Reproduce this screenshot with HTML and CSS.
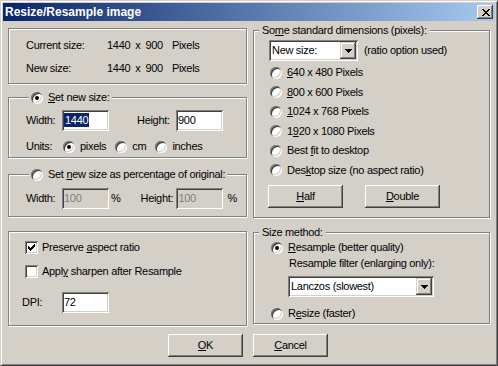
FILE: index.html
```html
<!DOCTYPE html>
<html lang="en">
  <head>
    <meta charset="UTF-8" />
    <meta name="viewport" content="width=device-width, initial-scale=1.0" />
    <title>Resize/Resample image</title>
    <link rel="stylesheet" href="styles.css">
  </head>
  <body>
    <div class="window">
      <div class="titlebar">
        <span class="title">Resize/Resample image</span>
        <span class="close">
          <svg width="8" height="7" viewBox="0 0 8 7" shape-rendering="crispEdges">
            <path d="M0 0h2v1H0z M6 0h2v1H6z M1 1h2v1H1z M5 1h2v1H5z M2 2h4v1H2z M3 3h2v1H3z M2 4h4v1H2z M1 5h2v1H1z M5 5h2v1H5z M0 6h2v1H0z M6 6h2v1H6z" fill="#000"/>
          </svg>
        </span>
      </div>

      <div class="main">
        <div class="col left">
          <div class="box info">
            <div class="info-row">
              <span class="info-label">Current size:</span>
              <span>1440</span><span class="x">x</span><span class="x">900</span><span class="unit">Pixels</span>
            </div>
            <div class="info-row">
              <span class="info-label">New size:</span>
              <span>1440</span><span class="x">x</span><span class="x">900</span><span class="unit">Pixels</span>
            </div>
          </div>

          <fieldset class="group newsize">
            <legend><span class="radio checked"></span><span><u>S</u>et new size:</span></legend>
            <div class="row size-row">
              <span class="lbl lbl-w">Width:</span>
              <span class="edit"><span class="sel">1440</span></span>
              <span class="lbl lbl-h">Height:</span>
              <span class="edit">900</span>
            </div>
            <div class="row units-row">
              <span class="lbl lbl-u">Units:</span>
              <span class="opt"><span class="radio checked"></span>pixels</span>
              <span class="opt"><span class="radio"></span>cm</span>
              <span class="opt"><span class="radio"></span>inches</span>
            </div>
          </fieldset>

          <fieldset class="group percent">
            <legend><span class="radio"></span><span>Set <u>n</u>ew size as percentage of original:</span></legend>
            <div class="row pct-row">
              <span class="lbl lbl-w">Width:</span>
              <span class="edit disabled">100</span>
              <span class="pct">%</span>
              <span class="lbl lbl-h2">Height:</span>
              <span class="edit disabled">100</span>
              <span class="pct pct-2">%</span>
            </div>
          </fieldset>

          <div class="box options">
            <div class="check-row first">
              <span class="check checked">
                <svg width="7" height="7" viewBox="0 0 7 7" shape-rendering="crispEdges">
                  <path d="M6 0h1v1H6z M5 1h2v1H5z M0 2h1v1H0z M4 2h3v1H4z M0 3h2v1H0z M3 3h3v1H3z M0 4h5v1H0z M1 5h3v1H1z M2 6h1v1H2z" fill="#000"/>
                </svg>
              </span>
              <span>Preserve <u>a</u>spect ratio</span>
            </div>
            <div class="check-row">
              <span class="check"></span>
              <span>Appl<u>y</u> sharpen after Resample</span>
            </div>
            <div class="row dpi-row">
              <span class="lbl lbl-dpi">DPI:</span>
              <span class="edit">72</span>
            </div>
          </div>
        </div>

        <div class="col right">
          <fieldset class="group standard">
            <legend>So<u>m</u>e standard dimensions (pixels):</legend>
            <div class="row combo-row">
              <span class="combo combo-small">
                <span class="combo-text">New size:</span>
                <span class="combo-btn">
                  <svg width="7" height="4" viewBox="0 0 7 4" shape-rendering="crispEdges">
                    <path d="M0 0h7v1H0z M1 1h5v1H1z M2 2h3v1H2z M3 3h1v1H3z" fill="#000"/>
                  </svg>
                </span>
              </span>
              <span class="hint">(ratio option used)</span>
            </div>
            <div class="radio-list">
              <div class="radio-row"><span class="radio"></span><span><u>6</u>40 x 480 Pixels</span></div>
              <div class="radio-row"><span class="radio"></span><span><u>8</u>00 x 600 Pixels</span></div>
              <div class="radio-row"><span class="radio"></span><span><u>1</u>024 x 768 Pixels</span></div>
              <div class="radio-row"><span class="radio"></span><span>1<u>9</u>20 x 1080 Pixels</span></div>
              <div class="radio-row"><span class="radio"></span><span>Best <u>f</u>it to desktop</span></div>
              <div class="radio-row"><span class="radio"></span><span>Des<u>k</u>top size (no aspect ratio)</span></div>
            </div>
            <div class="pair">
              <span class="btn"><u>H</u>alf</span>
              <span class="btn"><u>D</u>ouble</span>
            </div>
          </fieldset>

          <fieldset class="group method">
            <legend>Size method:</legend>
            <div class="radio-row resample"><span class="radio checked"></span><span><u>R</u>esample (better quality)</span></div>
            <div class="filter-label">Resample filter (enlarging only):</div>
            <span class="combo combo-filter">
              <span class="combo-text">Lanczos (slowest)</span>
              <span class="combo-btn">
                <svg width="7" height="4" viewBox="0 0 7 4" shape-rendering="crispEdges">
                  <path d="M0 0h7v1H0z M1 1h5v1H1z M2 2h3v1H2z M3 3h1v1H3z" fill="#000"/>
                </svg>
              </span>
            </span>
            <div class="radio-row resize"><span class="radio"></span><span>R<u>e</u>size (faster)</span></div>
          </fieldset>
        </div>
      </div>

      <div class="buttons">
        <span class="btn"><u>O</u>K</span>
        <span class="btn"><u>C</u>ancel</span>
      </div>
    </div>
  </body>
</html>
```

FILE: styles.css
```css
* {
  box-sizing: border-box;
}
body {
  margin: 0;
  background: #d4d0c8;
  color: #000;
  font-family: "Liberation Sans", Arial, sans-serif;
  font-size: 11px;
  line-height: 13px;
  letter-spacing: -0.3px;
}
u {
  text-decoration: underline;
  text-underline-offset: 1px;
}

/* window frame */
.window {
  width: 498px;
  height: 366px;
  padding: 2px;
  background: #d4d0c8;
  border: 1px solid;
  border-color: #d4d0c8 #404040 #404040 #d4d0c8;
  box-shadow: inset 1px 1px #fff, inset -1px -1px #808080;
}
.titlebar {
  height: 18px;
  display: flex;
  align-items: center;
  justify-content: space-between;
  padding: 0 2px;
  background: linear-gradient(to right, #0a246a, #a6caf0);
}
.title {
  color: #fff;
  font-weight: bold;
  font-size: 12px;
  letter-spacing: 0;
}
.close {
  width: 16px;
  height: 14px;
  display: flex;
  align-items: center;
  justify-content: center;
  padding-left: 1px;
  background: #d4d0c8;
  box-shadow: inset -1px -1px #404040, inset 1px 1px #fff, inset -2px -2px #808080, inset 2px 2px #d4d0c8;
}

/* columns */
.main {
  display: grid;
  grid-template-columns: 239px 237px;
  column-gap: 6px;
  padding: 0 5px;
}
.col {
  display: flex;
  flex-direction: column;
}
.col.left {
  margin-top: 7px;
}
.col.right {
  margin-top: 3px;
}

/* etched boxes */
.box {
  border: 1px solid #808080;
  box-shadow: inset 1px 1px #fff, 1px 1px #fff;
}
.group {
  margin: 0;
  padding: 0;
  min-width: 0;
  border: 1px solid #808080;
  box-shadow: inset 1px 1px #fff, 1px 1px #fff;
}
.group legend {
  padding: 0 3px;
  margin-left: 5px;
  height: 13px;
  line-height: 13px;
  background: #d4d0c8;
}
.newsize legend,
.percent legend {
  display: flex;
  align-items: center;
  gap: 5px;
  margin-left: 20px;
  padding: 0 2px;
}

/* size info */
.info {
  height: 56px;
  padding: 10px 0 0 17px;
}
.info-row {
  display: flex;
  height: 13px;
}
.info-row + .info-row {
  margin-top: 10px;
}
.info-label {
  width: 81px;
}
.info-row .x {
  margin-left: 5px;
}
.info-row .unit {
  margin-left: 9px;
}

/* rows of controls */
.row {
  display: flex;
  align-items: center;
}
.lbl-w {
  width: 36px;
}
.lbl-h {
  width: 39px;
  margin-left: 28px;
}
.lbl-h2 {
  width: 36px;
  margin-left: 20px;
}
.lbl-u {
  width: 37px;
}
.lbl-dpi {
  width: 40px;
}
.newsize {
  height: 67px;
  margin-top: 7px;
}
.size-row {
  height: 21px;
  margin-top: 6px;
  padding-left: 17px;
}
.units-row {
  height: 13px;
  margin-top: 9px;
  padding-left: 17px;
}
.opt {
  display: flex;
  align-items: center;
  gap: 5px;
  margin-right: 9px;
}
.percent {
  height: 49px;
  margin-top: 10px;
}
.pct-row {
  height: 21px;
  margin-top: 7px;
  padding-left: 17px;
}
.pct {
  margin-left: 2px;
}
.pct-2 {
  margin-left: 4px;
}

/* sunken edit */
.edit {
  width: 47px;
  height: 21px;
  padding: 2px 0 0 2px;
  line-height: 17px;
  background: #fff;
  box-shadow: inset 1px 1px #808080, inset -1px -1px #fff, inset 2px 2px #404040, inset -2px -2px #d4d0c8;
}
.edit.disabled {
  background: #d4d0c8;
  color: #808080;
}
.sel {
  display: inline-block;
  padding: 0 1px;
  line-height: 14px;
  background: #0a246a;
  color: #fff;
}

/* radio and check */
.radio {
  position: relative;
  flex: none;
  width: 12px;
  height: 12px;
  border-radius: 50%;
  background: #fff;
  box-shadow: inset 1px 1px #808080, inset -1px -1px #fff, inset 2px 2px #404040, inset -2px -2px #d4d0c8;
}
.radio.checked::after {
  content: "";
  position: absolute;
  left: 4px;
  top: 4px;
  width: 4px;
  height: 4px;
  border-radius: 50%;
  background: #000;
}
.check {
  flex: none;
  width: 13px;
  height: 13px;
  display: flex;
  align-items: center;
  justify-content: center;
  background: #fff;
  box-shadow: inset 1px 1px #808080, inset -1px -1px #fff, inset 2px 2px #404040, inset -2px -2px #d4d0c8;
}

/* options box */
.options {
  height: 95px;
  margin-top: 14px;
  padding-left: 16px;
}
.check-row {
  display: flex;
  align-items: center;
  gap: 4px;
  height: 13px;
  margin-top: 11px;
}
.check-row.first {
  margin-top: 9px;
}
.dpi-row {
  height: 21px;
  margin-top: 14px;
  margin-left: -3px;
}

/* combo boxes */
.combo {
  display: flex;
  height: 21px;
  padding: 2px;
  background: #fff;
  box-shadow: inset 1px 1px #808080, inset -1px -1px #fff, inset 2px 2px #404040, inset -2px -2px #d4d0c8;
}
.combo-text {
  flex: 1;
  padding-left: 1px;
  line-height: 17px;
}
.combo-btn {
  width: 16px;
  height: 17px;
  display: flex;
  align-items: center;
  justify-content: center;
  background: #d4d0c8;
  box-shadow: inset -1px -1px #404040, inset 1px 1px #d4d0c8, inset -2px -2px #808080, inset 2px 2px #fff;
}
.combo-small {
  width: 89px;
}
.combo-row {
  margin-top: 3px;
  padding-left: 15px;
}
.hint {
  margin-left: 6px;
}

/* standard dimensions */
.standard {
  height: 194px;
}
.radio-list {
  margin-top: 2px;
}
.radio-row {
  display: flex;
  align-items: center;
  gap: 5px;
  height: 19.5px;
  padding-left: 16px;
}
.pair {
  display: flex;
  gap: 22px;
  margin-top: 5px;
  padding-left: 14px;
}

/* buttons */
.btn {
  width: 75px;
  height: 23px;
  display: flex;
  align-items: center;
  justify-content: center;
  background: #d4d0c8;
  box-shadow: inset -1px -1px #404040, inset 1px 1px #fff, inset -2px -2px #808080, inset 2px 2px #d4d0c8;
}

/* size method */
.method {
  height: 98px;
  margin-top: 8px;
}
.method .radio-row {
  height: 13px;
  padding-left: 17px;
}
.method .resample {
  margin-top: 2px;
}
.filter-label {
  margin-top: 3px;
  padding-left: 35px;
  height: 13px;
}
.combo-filter {
  width: 146px;
  margin: 6px 0 0 34px;
}
.method .resize {
  margin-top: 10px;
}

.buttons {
  display: flex;
  justify-content: center;
  gap: 10px;
  margin-top: 8px;
  padding-right: 2px;
}
```
